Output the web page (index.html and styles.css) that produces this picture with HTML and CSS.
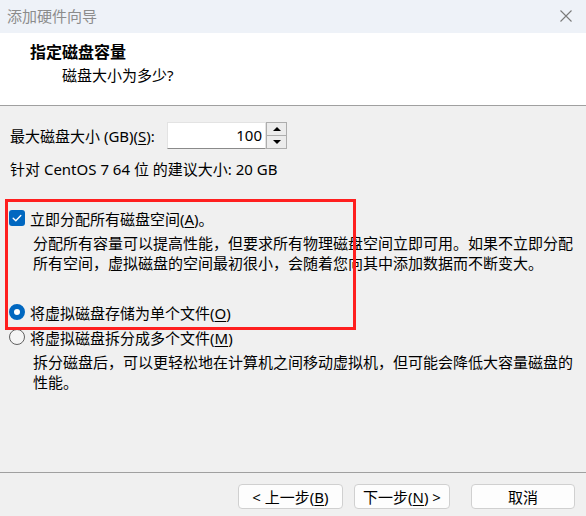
FILE: index.html
```html
<!DOCTYPE html>
<html lang="zh-CN">
<head>
<meta charset="utf-8">
<title>添加硬件向导</title>
<link rel="stylesheet" href="styles.css">
</head>
<body>
<div class="window">
  <div class="titlebar">
    <span class="title">添加硬件向导</span>
    <svg class="close" width="12" height="12" viewBox="0 0 12 12"><path d="M0.5 0.5 L11.5 11.5 M11.5 0.5 L0.5 11.5" stroke="#7a7a7a" stroke-width="1.1" fill="none"/></svg>
  </div>
  <div class="header">
    <div class="h-title">指定磁盘容量</div>
    <div class="h-sub">磁盘大小为多少?</div>
  </div>
  <div class="content">
    <div class="size-row">
      <span class="label">最大磁盘大小 (GB)(<u>S</u>):</span>
      <div class="spinner">
        <div class="spin-input">100</div>
        <div class="spin-btns">
          <div class="spin-btn"><span class="tri up"></span></div>
          <div class="spin-btn"><span class="tri down"></span></div>
        </div>
      </div>
    </div>
    <div class="line rec">针对 CentOS 7 64 位 的建议大小: 20 GB</div>

    <div class="option opt-check">
      <span class="checkbox"><svg width="16" height="16" viewBox="0 0 16 16"><path d="M4.2 8.3 L6.8 10.8 L11.8 5.6" stroke="#fff" stroke-width="1.4" fill="none" stroke-linecap="round" stroke-linejoin="round"/></svg></span>
      <span>立即分配所有磁盘空间(<u>A</u>)。</span>
    </div>
    <div class="desc">分配所有容量可以提高性能，但要求所有物理磁盘空间立即可用。如果不立即分配所有空间，虚拟磁盘的空间最初很小，会随着您向其中添加数据而不断变大。</div>

    <div class="option opt-r1">
      <span class="radio checked"></span>
      <span>将虚拟磁盘存储为单个文件(<u>O</u>)</span>
    </div>
    <div class="option opt-r2">
      <span class="radio"></span>
      <span>将虚拟磁盘拆分成多个文件(<u>M</u>)</span>
    </div>
    <div class="desc">拆分磁盘后，可以更轻松地在计算机之间移动虚拟机，但可能会降低大容量磁盘的性能。</div>

    <div class="annotation"></div>
  </div>
  <div class="footer">
    <button class="btn btn-back">&lt; 上一步(<u>B</u>)</button>
    <button class="btn btn-next">下一步(<u>N</u>) &gt;</button>
    <button class="btn btn-cancel">取消</button>
  </div>
</div>
</body>
</html>
```
FILE: styles.css
```css
* { box-sizing: border-box; }
html, body { margin: 0; padding: 0; }
body {
  width: 586px;
  height: 516px;
  overflow: hidden;
  background: #f0f0f0;
  font-family: "Noto Sans", "Noto Sans CJK SC", sans-serif;
  font-size: 15px;
  color: #000;
}
.window {
  display: flex;
  flex-direction: column;
  height: 516px;
}
.titlebar {
  height: 33px;
  background: #eef2f8;
  display: flex;
  align-items: center;
  justify-content: space-between;
  padding: 0 14px 2px 7px;
}
.title {
  color: #8c8c8c;
  font-size: 15px;
  line-height: 20px;
}
.close { display: block; }
.header {
  height: 73px;
  background: #fff;
  border-bottom: 1px solid #a0a0a0;
  padding: 8px 0 0 30px;
}
.h-title {
  font-weight: bold;
  font-size: 16px;
  line-height: 22px;
}
.h-sub {
  padding-left: 32px;
  margin-top: 2px;
  line-height: 20px;
}
.content {
  position: relative;
  flex: 1;
  padding: 16px 0 0 10px;
}
.size-row {
  display: flex;
  align-items: center;
  height: 27px;
}
.label { line-height: 20px; width: 150px; white-space: nowrap; }
.spinner {
  display: flex;
  margin-left: 7px;
  height: 27px;
}
.spin-input {
  width: 99px;
  height: 27px;
  background: #fff;
  border: 1px solid #e3e3e3;
  border-bottom: 1px solid #8a8a8a;
  text-align: right;
  padding-right: 3px;
  line-height: 25px;
}
.spin-btns {
  display: flex;
  flex-direction: column;
  width: 21px;
  height: 27px;
  border: 1px solid #adadad;
  background: #adadad;
  gap: 1px;
}
.spin-btn {
  flex: 1;
  background: #ececec;
  display: flex;
  align-items: center;
  justify-content: center;
}
.tri {
  width: 0; height: 0;
  border-left: 4px solid transparent;
  border-right: 4px solid transparent;
}
.tri.up { border-bottom: 4px solid #000; }
.tri.down { border-top: 4px solid #000; }
.line { line-height: 20px; }
.rec { margin-top: 10px; }
.option {
  display: flex;
  align-items: center;
  height: 20px;
  margin-left: -1px;
}
.opt-check { margin-top: 29px; }
.opt-r1 { margin-top: 29px; }
.opt-r2 { margin-top: 5px; }
.checkbox {
  width: 16px; height: 16px;
  border-radius: 3px;
  background: #0067c0;
  margin-right: 5px;
  display: block;
}
.checkbox svg { display: block; }
.radio {
  width: 16px; height: 16px;
  border-radius: 50%;
  border: 1px solid #616161;
  background: #f5f5f5;
  margin-right: 5px;
  display: block;
}
.radio.checked {
  border: 5px solid #0067c0;
  background: #fff;
}
.desc {
  margin: 5px 0 0 23px;
  width: 545px;
  line-height: 20px;
}
.annotation {
  position: absolute;
  left: 5px;
  top: 93px;
  width: 351px;
  height: 131px;
  border: 3px solid #ff1f1f;
  pointer-events: none;
}
.footer {
  height: 44px;
  border-top: 1px solid #a0a0a0;
  display: flex;
  justify-content: flex-end;
  padding: 11px 11px 0 0;
}
.btn {
  height: 25px;
  background: #fdfdfd;
  border: 1px solid #d0d0d0;
  border-radius: 4px;
  font-family: inherit;
  font-size: 15px;
  color: #000;
  padding: 0;
  line-height: 22px;
}
.btn-back { width: 105px; }
.btn-next { width: 96px; margin-left: 11px; }
.btn-cancel { width: 104px; margin-left: 21px; }
u { text-decoration-thickness: 1px; text-underline-offset: 2px; }
```
